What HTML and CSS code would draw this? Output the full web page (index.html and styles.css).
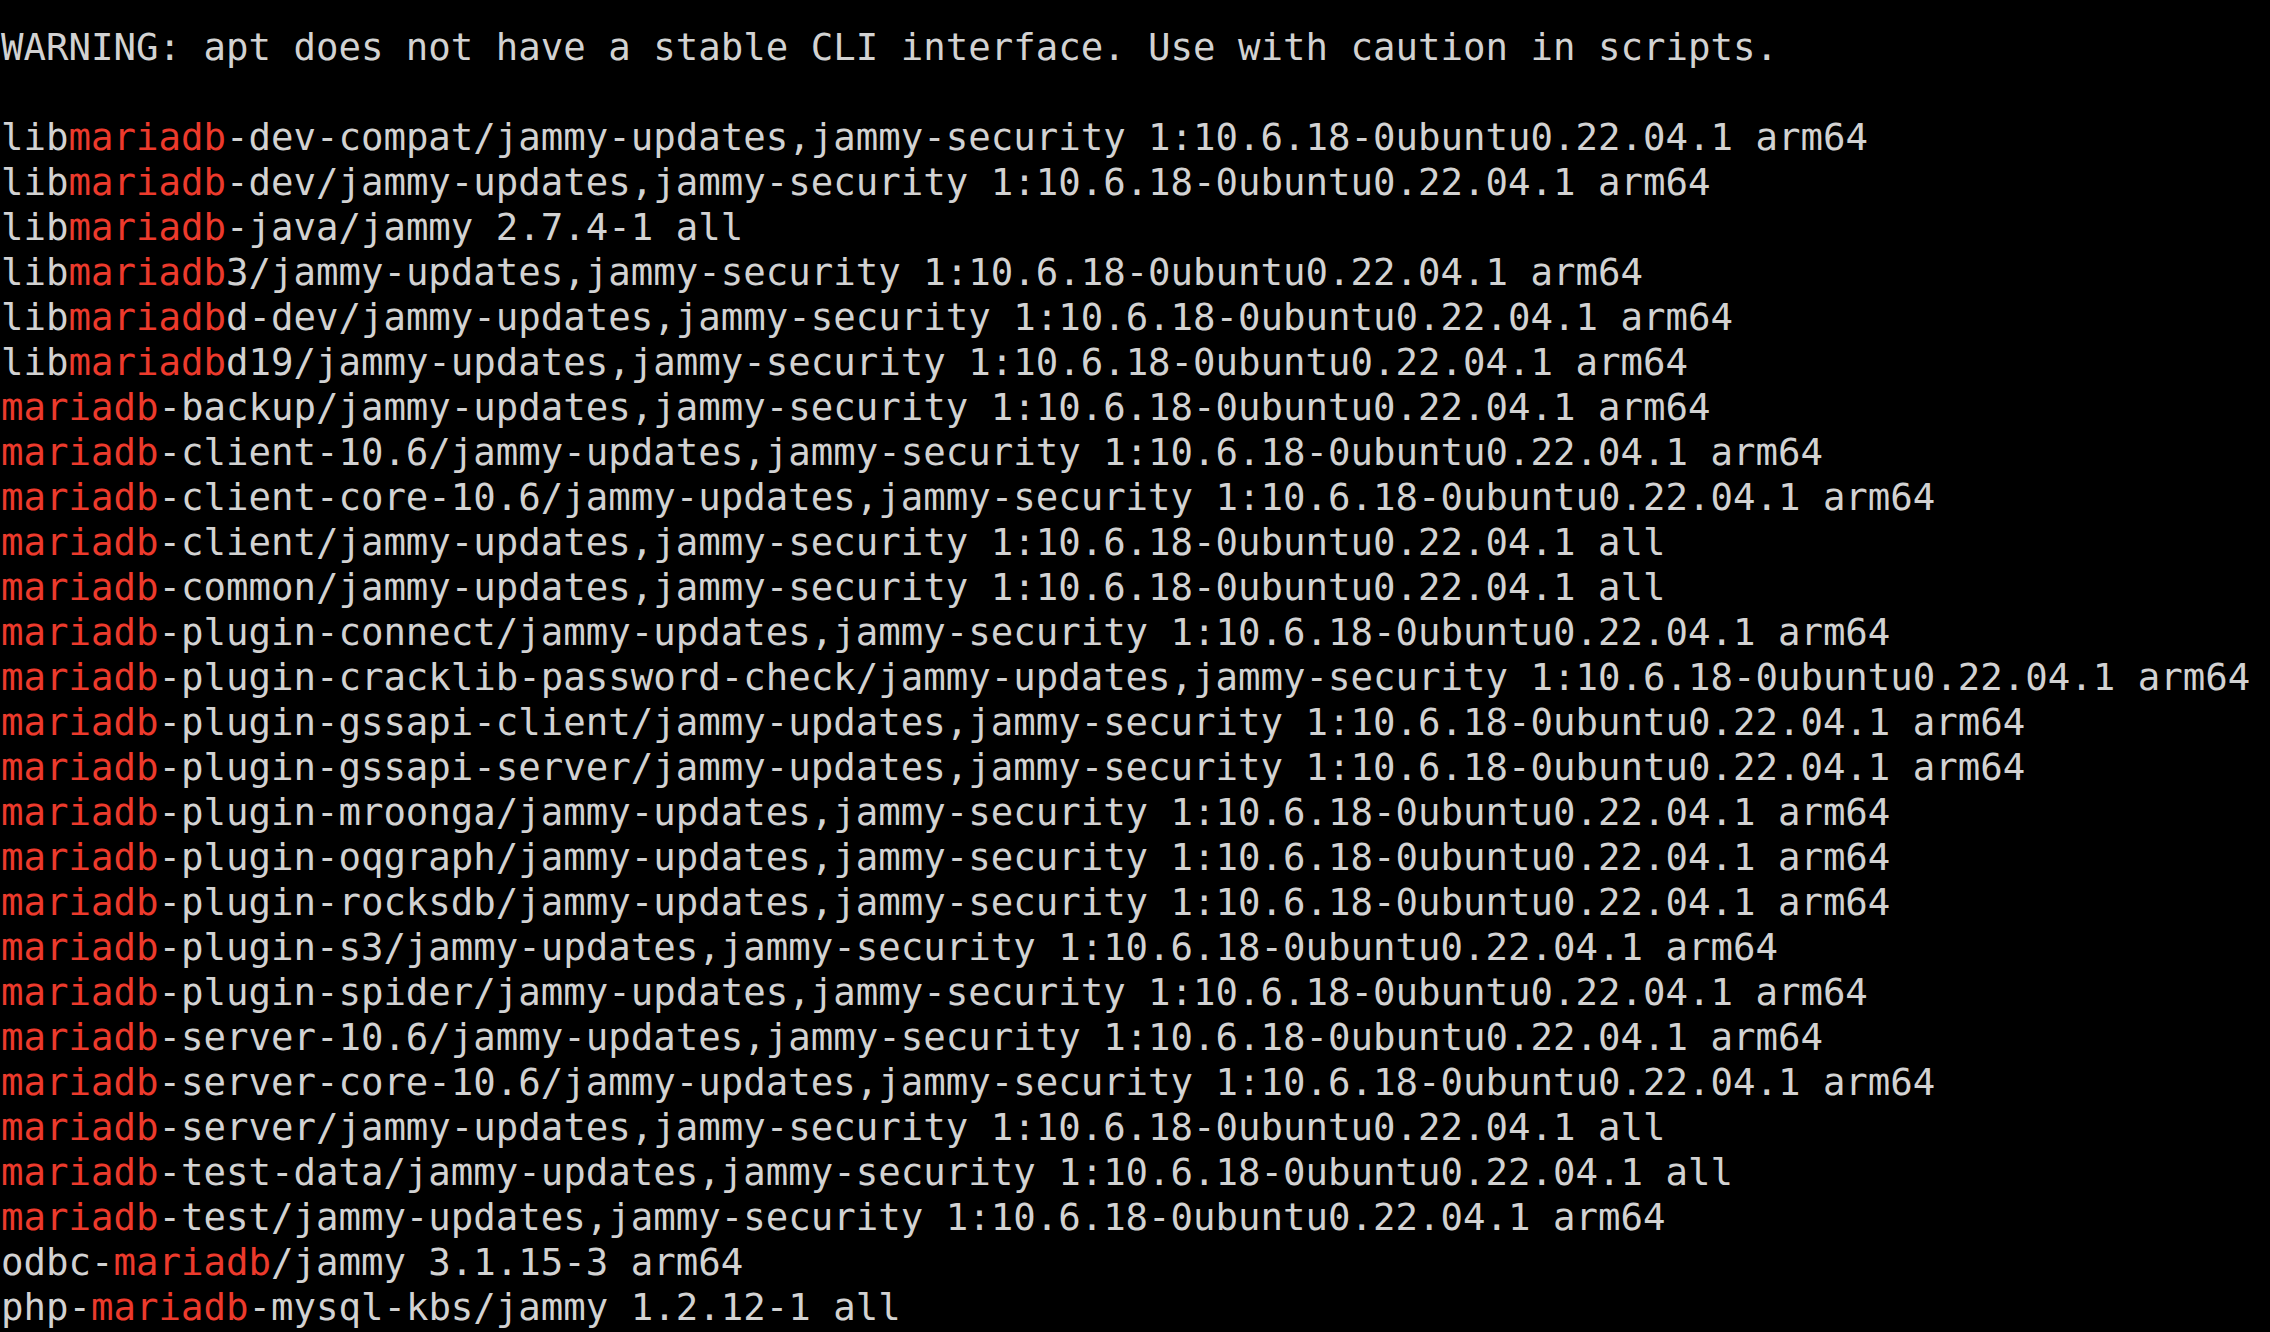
FILE: index.html
```html
<!DOCTYPE html>
<html lang="en">
<head>
<meta charset="utf-8">
<title>apt search mariadb</title>
<link rel="stylesheet" href="styles.css">
</head>
<body>
<pre class="console">WARNING: apt does not have a stable CLI interface. Use with caution in scripts.

lib<span class="hl">mariadb</span>-dev-compat/jammy-updates,jammy-security 1:10.6.18-0ubuntu0.22.04.1 arm64
lib<span class="hl">mariadb</span>-dev/jammy-updates,jammy-security 1:10.6.18-0ubuntu0.22.04.1 arm64
lib<span class="hl">mariadb</span>-java/jammy 2.7.4-1 all
lib<span class="hl">mariadb</span>3/jammy-updates,jammy-security 1:10.6.18-0ubuntu0.22.04.1 arm64
lib<span class="hl">mariadb</span>d-dev/jammy-updates,jammy-security 1:10.6.18-0ubuntu0.22.04.1 arm64
lib<span class="hl">mariadb</span>d19/jammy-updates,jammy-security 1:10.6.18-0ubuntu0.22.04.1 arm64
<span class="hl">mariadb</span>-backup/jammy-updates,jammy-security 1:10.6.18-0ubuntu0.22.04.1 arm64
<span class="hl">mariadb</span>-client-10.6/jammy-updates,jammy-security 1:10.6.18-0ubuntu0.22.04.1 arm64
<span class="hl">mariadb</span>-client-core-10.6/jammy-updates,jammy-security 1:10.6.18-0ubuntu0.22.04.1 arm64
<span class="hl">mariadb</span>-client/jammy-updates,jammy-security 1:10.6.18-0ubuntu0.22.04.1 all
<span class="hl">mariadb</span>-common/jammy-updates,jammy-security 1:10.6.18-0ubuntu0.22.04.1 all
<span class="hl">mariadb</span>-plugin-connect/jammy-updates,jammy-security 1:10.6.18-0ubuntu0.22.04.1 arm64
<span class="hl">mariadb</span>-plugin-cracklib-password-check/jammy-updates,jammy-security 1:10.6.18-0ubuntu0.22.04.1 arm64
<span class="hl">mariadb</span>-plugin-gssapi-client/jammy-updates,jammy-security 1:10.6.18-0ubuntu0.22.04.1 arm64
<span class="hl">mariadb</span>-plugin-gssapi-server/jammy-updates,jammy-security 1:10.6.18-0ubuntu0.22.04.1 arm64
<span class="hl">mariadb</span>-plugin-mroonga/jammy-updates,jammy-security 1:10.6.18-0ubuntu0.22.04.1 arm64
<span class="hl">mariadb</span>-plugin-oqgraph/jammy-updates,jammy-security 1:10.6.18-0ubuntu0.22.04.1 arm64
<span class="hl">mariadb</span>-plugin-rocksdb/jammy-updates,jammy-security 1:10.6.18-0ubuntu0.22.04.1 arm64
<span class="hl">mariadb</span>-plugin-s3/jammy-updates,jammy-security 1:10.6.18-0ubuntu0.22.04.1 arm64
<span class="hl">mariadb</span>-plugin-spider/jammy-updates,jammy-security 1:10.6.18-0ubuntu0.22.04.1 arm64
<span class="hl">mariadb</span>-server-10.6/jammy-updates,jammy-security 1:10.6.18-0ubuntu0.22.04.1 arm64
<span class="hl">mariadb</span>-server-core-10.6/jammy-updates,jammy-security 1:10.6.18-0ubuntu0.22.04.1 arm64
<span class="hl">mariadb</span>-server/jammy-updates,jammy-security 1:10.6.18-0ubuntu0.22.04.1 all
<span class="hl">mariadb</span>-test-data/jammy-updates,jammy-security 1:10.6.18-0ubuntu0.22.04.1 all
<span class="hl">mariadb</span>-test/jammy-updates,jammy-security 1:10.6.18-0ubuntu0.22.04.1 arm64
odbc-<span class="hl">mariadb</span>/jammy 3.1.15-3 arm64
php-<span class="hl">mariadb</span>-mysql-kbs/jammy 1.2.12-1 all</pre>
</body>
</html>
```

FILE: styles.css
```css
html, body {
  margin: 0;
  padding: 0;
  background: #000000;
  height: 100%;
  overflow: hidden;
}

.console {
  margin: 0;
  padding: 25px 0 0 1px;
  font-family: "DejaVu Sans Mono", "Liberation Mono", monospace;
  font-size: 37.37px;
  line-height: 45px;
  color: #d2d2d2;
  white-space: pre;
}

.hl {
  color: #ec3a2c;
}
```
